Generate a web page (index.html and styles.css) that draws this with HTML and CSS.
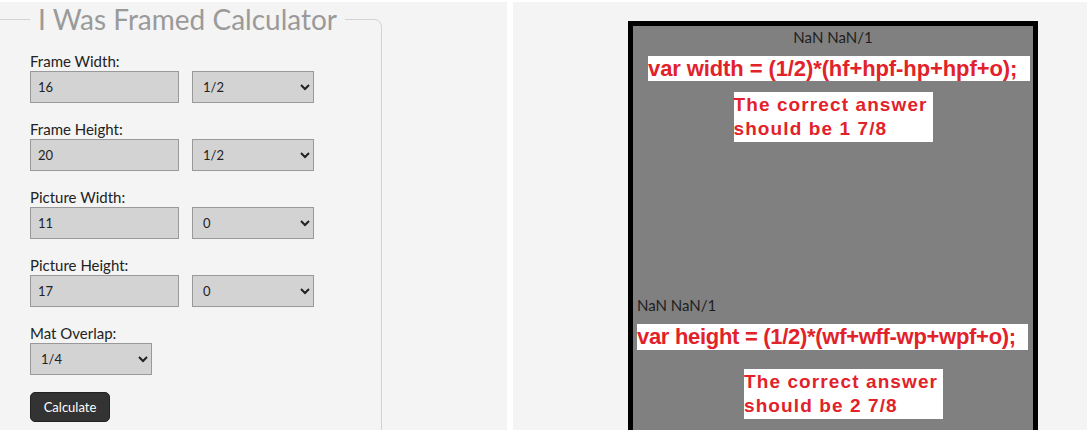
FILE: index.html
```html
<!DOCTYPE html>
<html lang="en">
<head>
    <meta charset="UTF-8">
    <meta name="viewport" content="width=device-width, initial-scale=1.0">
    <title>I Was Framed Calculator</title>
    <link rel="stylesheet" href="styles.css">
</head>
<body>
    <div class="page">
        <div class="panel calc">
            <fieldset class="frame-form">
                <legend>I Was Framed Calculator</legend>

                <div class="group">
                    <label for="fw">Frame Width:</label>
                    <div class="pair">
                        <input id="fw" type="text" value="16">
                        <select id="fwf">
                            <option>0</option><option>1/8</option><option>1/4</option><option>3/8</option>
                            <option selected>1/2</option><option>5/8</option><option>3/4</option><option>7/8</option>
                        </select>
                    </div>
                </div>

                <div class="group">
                    <label for="fh">Frame Height:</label>
                    <div class="pair">
                        <input id="fh" type="text" value="20">
                        <select id="fhf">
                            <option>0</option><option>1/8</option><option>1/4</option><option>3/8</option>
                            <option selected>1/2</option><option>5/8</option><option>3/4</option><option>7/8</option>
                        </select>
                    </div>
                </div>

                <div class="group">
                    <label for="pw">Picture Width:</label>
                    <div class="pair">
                        <input id="pw" type="text" value="11">
                        <select id="pwf">
                            <option selected>0</option><option>1/8</option><option>1/4</option><option>3/8</option>
                            <option>1/2</option><option>5/8</option><option>3/4</option><option>7/8</option>
                        </select>
                    </div>
                </div>

                <div class="group">
                    <label for="ph">Picture Height:</label>
                    <div class="pair">
                        <input id="ph" type="text" value="17">
                        <select id="phf">
                            <option selected>0</option><option>1/8</option><option>1/4</option><option>3/8</option>
                            <option>1/2</option><option>5/8</option><option>3/4</option><option>7/8</option>
                        </select>
                    </div>
                </div>

                <div class="group">
                    <label for="mat">Mat Overlap:</label>
                    <select id="mat">
                        <option>1/8</option><option selected>1/4</option><option>3/8</option><option>1/2</option>
                    </select>
                </div>

                <button type="button" class="calc-btn">Calculate</button>
            </fieldset>
        </div>

        <div class="panel preview">
            <div class="frame">
                <p class="dims dims-top">NaN NaN/1</p>
                <p class="formula formula-w">var width = (1/2)*(hf+hpf-hp+hpf+o);</p>
                <p class="answer answer-w">The correct answer<br>should be 1 7/8</p>

                <p class="dims dims-side">NaN NaN/1</p>
                <p class="formula formula-h">var height = (1/2)*(wf+wff-wp+wpf+o);</p>
                <p class="answer answer-h">The correct answer<br>should be 2 7/8</p>
            </div>
        </div>
    </div>
</body>
</html>
```

FILE: styles.css
```css
html, body {
    margin: 0;
    height: 430px;
    overflow: hidden;
    background: #fff;
}
body {
    font-family: Lato, "Open Sans", sans-serif;
    color: #222;
}
.page {
    display: flex;
    gap: 6px;
    height: 430px;
    padding-top: 2px;
    box-sizing: border-box;
}
.panel {
    background: #f4f4f4;
    height: 100%;
    overflow: hidden;
}
.calc {
    width: 507px;
    flex: none;
}
.preview {
    flex: 1;
    padding-top: 19px;
    box-sizing: border-box;
}

/* form */
.frame-form {
    margin: 0 0 0 -10px;
    width: 392px;
    box-sizing: border-box;
    padding: 0 0 0 39px;
    border: 1px solid #d2d2d2;
    border-radius: 8px;
    min-height: 460px;
}
.frame-form legend {
    padding: 0 8px;
    font-size: 28px;
    line-height: 34px;
    color: #9a9a9a;
}
.group {
    margin-bottom: 17px;
}
.group:first-of-type {
    margin-top: 16px;
}
label {
    display: block;
    font-size: 15px;
    line-height: 19px;
    color: #222;
}
.pair {
    display: flex;
    gap: 13px;
}
input, select {
    height: 32px;
    box-sizing: border-box;
    border: 1px solid #999;
    background: #d3d3d3;
    color: #222;
    font-family: Lato, sans-serif;
    font-size: 13px;
    border-radius: 0;
    margin: 0;
}
input {
    width: 149px;
    padding: 0 7px;
}
select {
    width: 122px;
    padding: 0 6px;
}
.calc-btn {
    display: block;
    margin-top: 5px;
    width: 80px;
    height: 30px;
    background: #333;
    color: #fff;
    border: 1px solid #222;
    border-radius: 5px;
    font-family: Lato, sans-serif;
    font-size: 13px;
}

/* preview */
.frame {
    margin-left: 115px;
    width: 410px;
    height: 520px;
    box-sizing: border-box;
    border: 5px solid #000;
    background: #808080;
}
.frame p {
    margin: 0;
}
.dims {
    font-size: 15px;
    line-height: 18px;
    color: #1e1e1e;
}
.dims-top {
    margin-top: 2px !important;
    text-align: center;
}
.dims-side {
    margin-top: 154px !important;
    padding-left: 4px;
}
.formula {
    background: #fff;
    color: #e2222a;
    font-family: "Liberation Sans", Arial, sans-serif;
    font-weight: bold;
    font-size: 22px;
    line-height: 25px;
    white-space: nowrap;
}
.formula-w {
    margin: 10px 3px 0 15px !important;
    letter-spacing: -0.1px;
}
.formula-h {
    margin: 10px 5px 0 4px !important;
    line-height: 26px;
    letter-spacing: -0.3px;
}
.answer {
    width: 199px;
    box-sizing: border-box;
    padding: 1px 0;
    background: #fff;
    color: #e2222a;
    font-family: "Liberation Sans", Arial, sans-serif;
    font-weight: bold;
    font-size: 19px;
    line-height: 24px;
    letter-spacing: 1.1px;
    white-space: nowrap;
}
.answer-w {
    margin: 11px auto 0 !important;
}
.answer-h {
    margin: 19px 0 0 111px !important;
}
```
